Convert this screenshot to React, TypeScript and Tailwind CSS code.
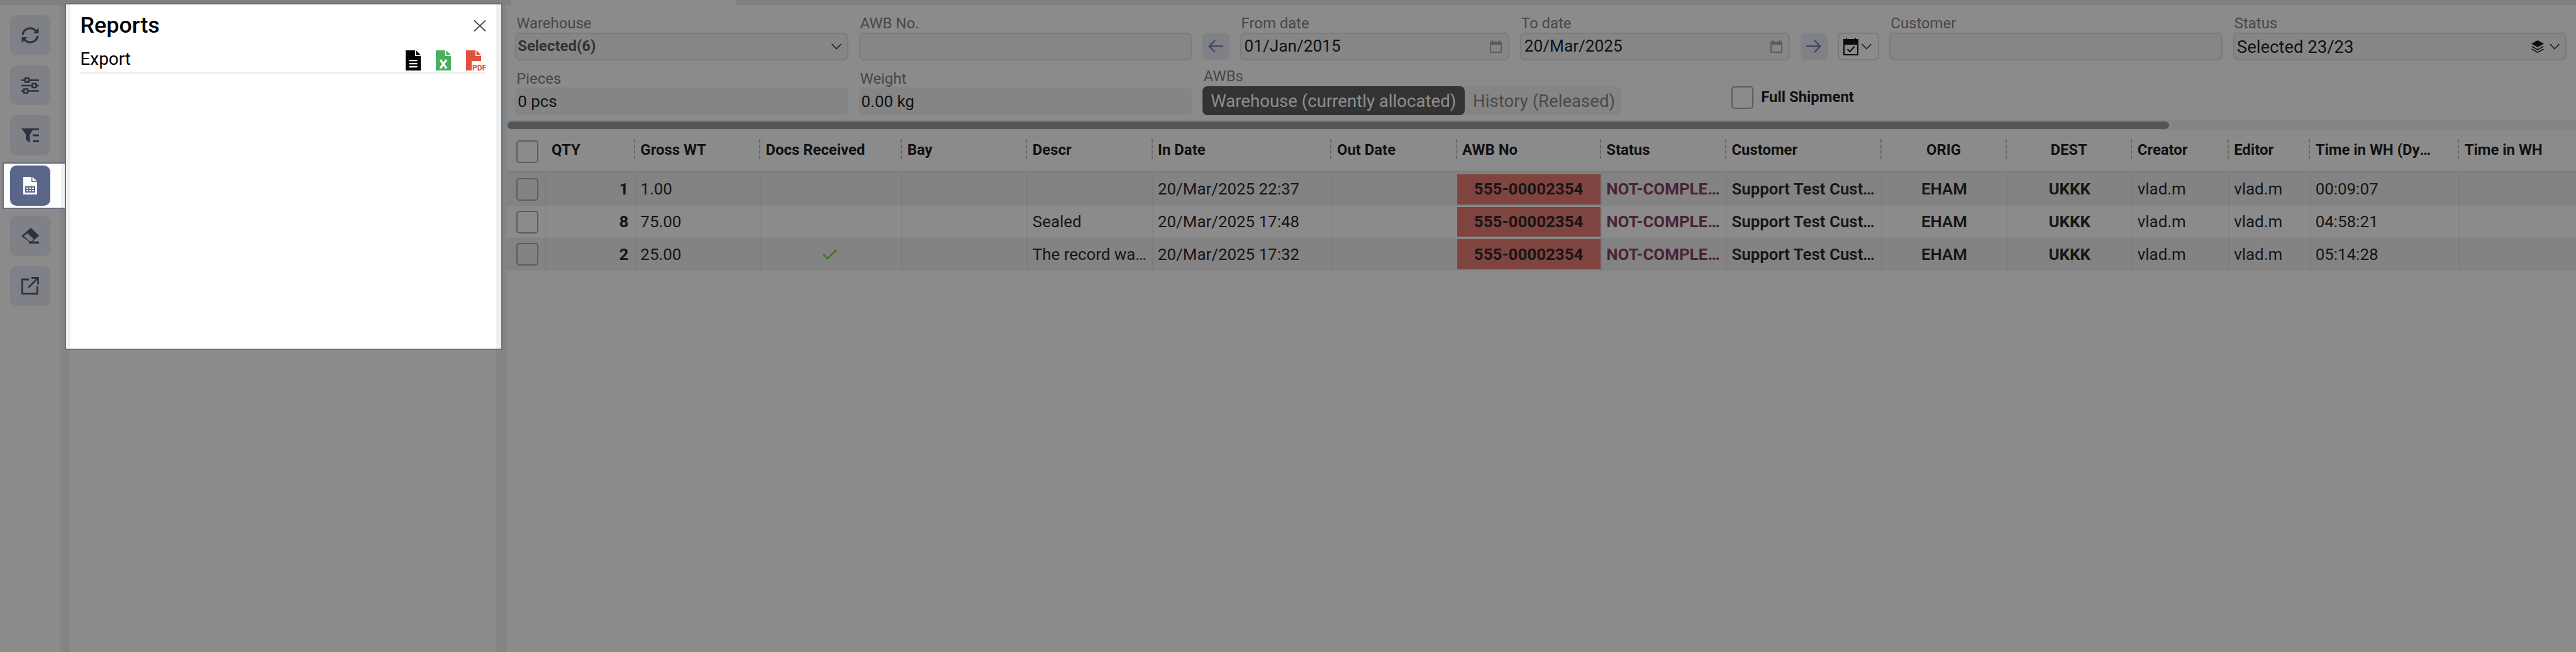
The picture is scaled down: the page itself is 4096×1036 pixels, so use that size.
import { ChevronDown } from "lucide-react"

const gridCols =
  "grid grid-cols-[62.7px_141.4px_199.2px_225.1px_199.2px_199.2px_284.9px_199.2px_229.1px_199.2px_247px_199.2px_199.2px_153.4px_129.5px_237px_1fr]"

const columns = [
  { label: "QTY" },
  { label: "Gross WT" },
  { label: "Docs Received" },
  { label: "Bay" },
  { label: "Descr" },
  { label: "In Date" },
  { label: "Out Date" },
  { label: "AWB No" },
  { label: "Status" },
  { label: "Customer" },
  { label: "ORIG", center: true },
  { label: "DEST", center: true },
  { label: "Creator" },
  { label: "Editor" },
  { label: "Time in WH (Dynamic)" },
  { label: "Time in WH" },
]

const rows = [
  { qty: 1, wt: "1.00", docs: false, descr: "", date: "20/Mar/2025 22:37", time: "00:09:07" },
  { qty: 8, wt: "75.00", docs: false, descr: "Sealed", date: "20/Mar/2025 17:48", time: "04:58:21" },
  { qty: 2, wt: "25.00", docs: true, descr: "The record was updated", date: "20/Mar/2025 17:32", time: "05:14:28" },
]

function Checkbox() {
  return <div className="h-[35.9px] w-[34.9px] rounded-[5px] border-2 border-[#5c5c5c]" />
}

function SideButton({ children, active }: { children: React.ReactNode; active?: boolean }) {
  return (
    <div className="relative h-[63.7px] w-[63.7px]">
      {active && (
        <div className="absolute -top-[5px] left-[-12px] z-20 h-[73.4px] w-[101.3px] border-2 border-[#6a6e7c] bg-white">
          <div className="absolute top-0 right-0 h-full w-[6px] bg-[#eef1f2]" />
        </div>
      )}
      <div
        className={
          active
            ? "absolute inset-0 z-30 flex items-center justify-center rounded-[10px] bg-[#5a6689]"
            : "absolute inset-0 flex items-center justify-center rounded-[10px] bg-[#808186]"
        }
      >
        {children}
      </div>
    </div>
  )
}

function Label({ children }: { children: React.ReactNode }) {
  return <div className="h-[27.9px] pl-[2px] text-[23.9px] leading-[27.9px] text-[#474747]">{children}</div>
}

function CalendarIcon() {
  return (
    <svg width="19" height="20" viewBox="0 0 19 20" className="text-[#5c5c5c]">
      <path d="M4 0v4M15 0v4" stroke="currentColor" strokeWidth="2" />
      <rect x="1" y="3" width="17" height="16" fill="none" stroke="currentColor" strokeWidth="2" />
      <rect x="1" y="3" width="17" height="4" fill="currentColor" />
    </svg>
  )
}

function FileDoc() {
  return (
    <svg width="24" height="32" viewBox="0 0 24 32" className="block">
      <path d="M0 0h15v9h9v23H0z" fill="#000" />
      <path d="M16.5 0L24 7.5h-7.5z" fill="#000" />
      <path d="M5.5 15h13v2.2h-13zM5.5 20h13v2.2h-13zM5.5 25h13v2.2h-13z" fill="#fff" />
    </svg>
  )
}

function FileExcel() {
  return (
    <svg width="24" height="32" viewBox="0 0 24 32" className="block">
      <path d="M0 0h15v9h9v23H0z" fill="#4caf5f" />
      <path d="M16.5 0L24 7.5h-7.5z" fill="#4caf5f" />
      <path d="M7 15l10 13.5M17 15L7 28.5" stroke="#fff" strokeWidth="3.2" fill="none" />
    </svg>
  )
}

function FilePdf() {
  return (
    <svg width="32" height="32" viewBox="0 0 32 32" className="block">
      <path d="M0 0h15v9h9v8H9v15H0z" fill="#e05140" />
      <path d="M16.5 0L24 7.5h-7.5z" fill="#e05140" />
      <text x="10" y="31.5" fontSize="13" fontWeight="700" fill="#e05140" textLength="22" lengthAdjust="spacingAndGlyphs">
        PDF
      </text>
    </svg>
  )
}

const iconColor = "#2e3240"

function SyncIcon() {
  return (
    <svg width="28" height="26" viewBox="0 0 28 26" fill="none">
      <path d="M2 12C3 5.5 8.5 1.8 14 1.8c4 0 7 1.7 9.5 5" stroke={iconColor} strokeWidth="3.2" />
      <path d="M27.5 1v9h-9z" fill={iconColor} />
      <path d="M26 14c-1 6.500-6.500 10.200-12 10.200-4 0-7-1.700-9.500-5" stroke={iconColor} strokeWidth="3.2" />
      <path d="M.5 25v-9h9z" fill={iconColor} />
    </svg>
  )
}

function SlidersIcon() {
  return (
    <svg width="28" height="26" viewBox="0 0 28 26" fill="none" stroke={iconColor} strokeWidth="2.6">
      <path d="M0 4.500h5M13 4.500h15M0 13h17M24 13h4M0 21.500h3M11 21.500h17" />
      <rect x="6" y="1.300" width="6" height="6" />
      <rect x="17.500" y="10" width="6" height="6" />
      <rect x="4" y="18.500" width="6" height="6" />
    </svg>
  )
}

function FilterIcon() {
  return (
    <svg width="28" height="23" viewBox="0 0 28 23" fill={iconColor}>
      <path d="M0 0h20l-6.500 9.500V23L7 17.500V9.500z" />
      <path d="M18 0h10v3H18zM18 9.500h10v3H18zM18 19h10v3H18z" />
    </svg>
  )
}

function ReportIcon() {
  return (
    <svg width="22" height="28" viewBox="0 0 22 28">
      <path d="M0 0h13v8h9v20H0z" fill="#fff" />
      <path d="M14.500 0L22 7h-7.500z" fill="#fff" />
      <rect x="3" y="15" width="16" height="10" fill="#5a6689" />
      <path d="M5 17h3v2H5zM9.500 17h3v2h-3zM14 17h3v2h-3zM5 21h3v2H5zM9.500 21h3v2h-3zM14 21h3v2h-3z" fill="#fff" />
    </svg>
  )
}

function EraserIcon() {
  return (
    <svg width="28" height="25" viewBox="0 0 28 25" fill={iconColor}>
      <path d="M15 0l13 12.500-10 9h-6.500L0 13zM9.500 8.500L4 13l8.500 8h4l3-3z" fillRule="evenodd" />
      <path d="M12 21.500h16V25H12z" />
    </svg>
  )
}

function ExternalIcon() {
  return (
    <svg width="28" height="28" viewBox="0 0 28 28" fill="none" stroke={iconColor} strokeWidth="2.8">
      <path d="M12 4H1.400v22.600h24V15" />
      <path d="M11 17L26.500 1.500M16 1.500h10.600V12" />
    </svg>
  )
}

function CalendarCheck() {
  return (
    <svg width="24" height="28" viewBox="0 0 24 28" fill="none">
      <path d="M5 0v4M19 0v4" stroke="#0c0c0c" strokeWidth="2" />
      <rect x="1" y="3" width="22" height="24" stroke="#0c0c0c" strokeWidth="2" />
      <rect x="1" y="3" width="22" height="8" fill="#0c0c0c" />
      <path d="M6.500 18l4 4 7-8" stroke="#0c0c0c" strokeWidth="2" />
    </svg>
  )
}

function LayersIcon() {
  return (
    <svg width="22" height="20" viewBox="0 0 22 20" fill="#0e0e0e">
      <path d="M11 0l10 5.500L11 11 1 5.500z" />
      <path d="M2.500 9.300L11 14l8.500-4.700 1.500 1L11 15.800 1 10.300z" />
      <path d="M2.500 13.500L11 18.200l8.500-4.700 1.500 1L11 20 1 14.500z" />
    </svg>
  )
}

function ArrowIcon({ flip }: { flip?: boolean }) {
  return (
    <svg width="24" height="21" viewBox="0 0 24 21" fill="none" stroke="#3f4660" strokeWidth="2.4" className={flip ? "rotate-180" : ""}>
      <path d="M24 10.500H2M11 1L1.800 10.500 11 20" />
    </svg>
  )
}

export default function App() {
  return (
    <div className="relative flex h-[1036px] w-[4096px] flex-col overflow-hidden bg-[#8b8b8b] [font-family:Roboto,sans-serif]">
      {/* top strip */}
      <div className="h-[8px] shrink-0 bg-[#808080]">
        <div className="ml-[812.7px] h-full w-[358.6px] bg-[#8b8b8b]" />
      </div>

      <div className="flex flex-1">
        {/* sidebar */}
        <div className="flex w-[95.6px] shrink-0 flex-col items-center gap-[16.04px] pt-[16px] pl-[0.4px]">
          <SideButton><SyncIcon /></SideButton>
          <SideButton><SlidersIcon /></SideButton>
          <SideButton><FilterIcon /></SideButton>
          <SideButton active><ReportIcon /></SideButton>
          <SideButton><EraserIcon /></SideButton>
          <SideButton><ExternalIcon /></SideButton>
        </div>
        <div className="w-[15.9px] shrink-0 bg-[#848484]" />
        <div className="w-[677.3px] shrink-0" />
        <div className="w-[16px] shrink-0 bg-[#848484]" />

        {/* main */}
        <div className="flex min-w-0 flex-1 flex-col">
          {/* filters row 1 */}
          <div className="flex gap-[16.5px] pt-[16px] pl-[14.4px]">
            <div className="w-[529.9px]">
              <Label>Warehouse</Label>
              <div className="flex h-[43.8px] items-center justify-between rounded-[8px] border-2 border-[#7b7b7b] bg-[#868686] pr-[3.5px] pl-[2px] text-[23.9px] font-bold text-[#333]">
                Selected(6)
                <ChevronDown className="h-[28px] w-[28px] text-[#111]" strokeWidth={1.2} />
              </div>
            </div>
            <div className="w-[529.7px]">
              <Label>AWB No.</Label>
              <div className="h-[43.8px] rounded-[8px] border-2 border-[#7b7b7b] bg-[#868686]" />
            </div>
            <div className="w-[43.3px] pt-[27.9px]">
              <div className="flex h-[43.8px] items-center justify-center rounded-[8px] bg-[#808186]">
                <ArrowIcon />
              </div>
            </div>
            <div className="w-[428.8px]">
              <Label>From date</Label>
              <div className="flex h-[43.8px] items-center justify-between rounded-[8px] border-2 border-[#7b7b7b] bg-[#868686] pr-[10px] pl-[5px] text-[26.2px] text-[#111]">
                01/Jan/2015
                <CalendarIcon />
              </div>
            </div>
            <div className="w-[429.2px]">
              <Label>To date</Label>
              <div className="flex h-[43.8px] items-center justify-between rounded-[8px] border-2 border-[#7b7b7b] bg-[#868686] pr-[10px] pl-[5px] text-[26.2px] text-[#111]">
                20/Mar/2025
                <CalendarIcon />
              </div>
            </div>
            <div className="w-[43.3px] pt-[27.9px]">
              <div className="flex h-[43.8px] items-center justify-center rounded-[8px] bg-[#808186]">
                <ArrowIcon flip />
              </div>
            </div>
            <div className="w-[65.5px] pt-[27.9px]">
              <div className="flex h-[43.8px] items-center rounded-[8px] border-2 border-[#7b7b7b] pl-[7px]">
                <CalendarCheck />
                <ChevronDown className="-ml-[1px] h-[28px] w-[28px] text-[#111]" strokeWidth={1.2} />
              </div>
            </div>
            <div className="w-[530px]">
              <Label>Customer</Label>
              <div className="h-[43.8px] rounded-[8px] border-2 border-[#7b7b7b] bg-[#868686]" />
            </div>
            <div className="w-[530.5px]">
              <Label>Status</Label>
              <div className="flex h-[43.8px] items-center rounded-[8px] border-2 border-[#7b7b7b] bg-[#868686] pr-[3px] pl-[4px] text-[#111]">
                <span className="flex-1 pt-[2px] text-[27.5px]">Selected 23/23</span>
                <LayersIcon />
                <ChevronDown className="ml-[2px] h-[28px] w-[28px]" strokeWidth={1.2} />
              </div>
            </div>
          </div>

          {/* filters row 2 */}
          <div className="flex h-[95.6px] items-end pb-[8px] pl-[14.4px]">
            <div className="mr-[16.5px] w-[529.9px]">
              <Label>Pieces</Label>
              <div className="flex h-[43.8px] items-center rounded-[8px] bg-[#858585] pl-[4px] text-[25.9px] text-[#111]">0 pcs</div>
            </div>
            <div className="mr-[16.5px] w-[529.7px]">
              <Label>Weight</Label>
              <div className="flex h-[43.8px] items-center rounded-[8px] bg-[#858585] pl-[4px] text-[25.9px] text-[#111]">0.00 kg</div>
            </div>
            <div className="w-[666px]">
              <div className="h-[29.9px] pl-[2px] text-[23.9px] leading-[27.9px] text-[#474747]">AWBs</div>
              <div className="flex h-[45.8px] rounded-[8px] bg-[#858585] text-[27.6px]">
                <div className="flex w-[417px] items-center justify-center rounded-[8px] bg-[#333] text-[#8f8f8f]">Warehouse (currently allocated)</div>
                <div className="flex flex-1 items-center pl-[13.3px] text-[#4a4a4a]">History (Released)</div>
              </div>
            </div>
            <div className="mb-[10px] ml-[175px] flex items-center gap-[12.5px]">
              <Checkbox />
              <span className="text-[23.9px] font-bold text-[#111]">Full Shipment</span>
            </div>
          </div>

          {/* horizontal scrollbar */}
          <div className="h-[15.9px] bg-[#848587] py-[2px] pl-[2px]">
            <div className="h-full w-[2642px] rounded-full bg-[#525659]" />
          </div>

          {/* table header */}
          <div className={`${gridCols} h-[67.7px] border-b-4 border-[#7f7f7f]`}>
            <div className="flex items-center pt-[4px] pl-[16px]">
              <Checkbox />
            </div>
            {columns.map((c, i) => (
              <div key={c.label} className="relative flex min-w-0 items-center">
                {i > 0 && <div className="absolute top-[13.7px] left-[-1px] h-[32px] border-l-2 border-dashed border-[#6a6a6a]" />}
                <span
                  className={
                    c.center
                      ? "w-full truncate px-[9px] text-center text-[23.9px] font-bold text-[#111]"
                      : "w-full truncate pr-[40px] pl-[9.5px] text-[23.9px] font-bold text-[#111]"
                  }
                >
                  {c.label}
                </span>
              </div>
            ))}
          </div>

          {/* table rows */}
          {rows.map((r, i) => (
            <div
              key={i}
              className={`${gridCols} h-[51.8px] text-[25.9px] text-[#161616] ${i === 1 ? "bg-[#8b8b8b]" : "bg-[#838383]"}`}
            >
              <div className="flex items-center pl-[16px]">
                <Checkbox />
              </div>
              <div className="flex items-center justify-end border-l-2 border-black/[0.04] pr-[9.5px] font-bold">{r.qty}</div>
              <div className="flex items-center border-l-2 border-black/[0.04] pl-[7.5px]">{r.wt}</div>
              <div className="flex items-center justify-center border-l-2 border-black/[0.04] pr-[4px]">
                {r.docs && (
                  <svg width="23" height="16" viewBox="0 0 23 16" fill="none" stroke="#38701e" strokeWidth="2.4">
                    <path d="M1 8l6.500 6.800L22 1" />
                  </svg>
                )}
              </div>
              <div className="border-l-2 border-black/[0.04]" />
              <div className="flex min-w-0 items-center border-l-2 border-black/[0.04] pr-[4px] pl-[7.5px]">
                <span className="truncate">{r.descr}</span>
              </div>
              <div className="flex items-center border-l-2 border-black/[0.04] pl-[7.5px]">{r.date}</div>
              <div className="border-l-2 border-black/[0.04]" />
              <div className="flex items-center py-[2px] pl-[1px]">
                <div className="flex h-full w-full items-center justify-center bg-[#804440] font-bold">555-00002354</div>
              </div>
              <div className="flex min-w-0 items-center border-l-2 border-black/[0.04] pr-[4px] pl-[7.5px] font-bold text-[#4a2236]">
                <span className="truncate">NOT-COMPLETED</span>
              </div>
              <div className="flex min-w-0 items-center border-l-2 border-black/[0.04] pr-[4px] pl-[7.5px] font-semibold">
                <span className="truncate">Support Test Customer</span>
              </div>
              <div className="flex items-center justify-center border-l-2 border-black/[0.04] font-semibold">EHAM</div>
              <div className="flex items-center justify-center border-l-2 border-black/[0.04] font-bold">UKKK</div>
              <div className="flex items-center border-l-2 border-black/[0.04] pl-[7.5px]">vlad.m</div>
              <div className="flex items-center border-l-2 border-black/[0.04] pl-[7.5px]">vlad.m</div>
              <div className="flex items-center border-l-2 border-black/[0.04] pl-[7.5px]">{r.time}</div>
              <div className="border-l-2 border-black/[0.04]" />
            </div>
          ))}
        </div>
      </div>

      {/* reports popup */}
      <div className="absolute top-[5px] left-[102.6px] z-10 flex h-[551px] w-[696.5px] border-2 border-[#6a6e7c] bg-[#eef1f2]">
        <div className="ml-[7px] h-full w-[677.3px] bg-white px-[15.9px]">
          <div className="flex h-[66px] items-center justify-between pt-[1px]">
            <span className="text-[35.9px] font-medium text-black">Reports</span>
            <svg width="20" height="18" viewBox="0 0 20 18" fill="none" stroke="#444" strokeWidth="1.8">
              <path d="M1 .5l18 17M19 .5l-18 17" />
            </svg>
          </div>
          <div className="flex h-[43.5px] items-center justify-between border-b-2 border-[#eeeeee]">
            <span className="text-[27.9px] text-black">Export</span>
            <div className="mb-[3px] flex items-center gap-[24px] self-end">
              <FileDoc />
              <FileExcel />
              <FilePdf />
            </div>
          </div>
        </div>
      </div>
    </div>
  )
}
